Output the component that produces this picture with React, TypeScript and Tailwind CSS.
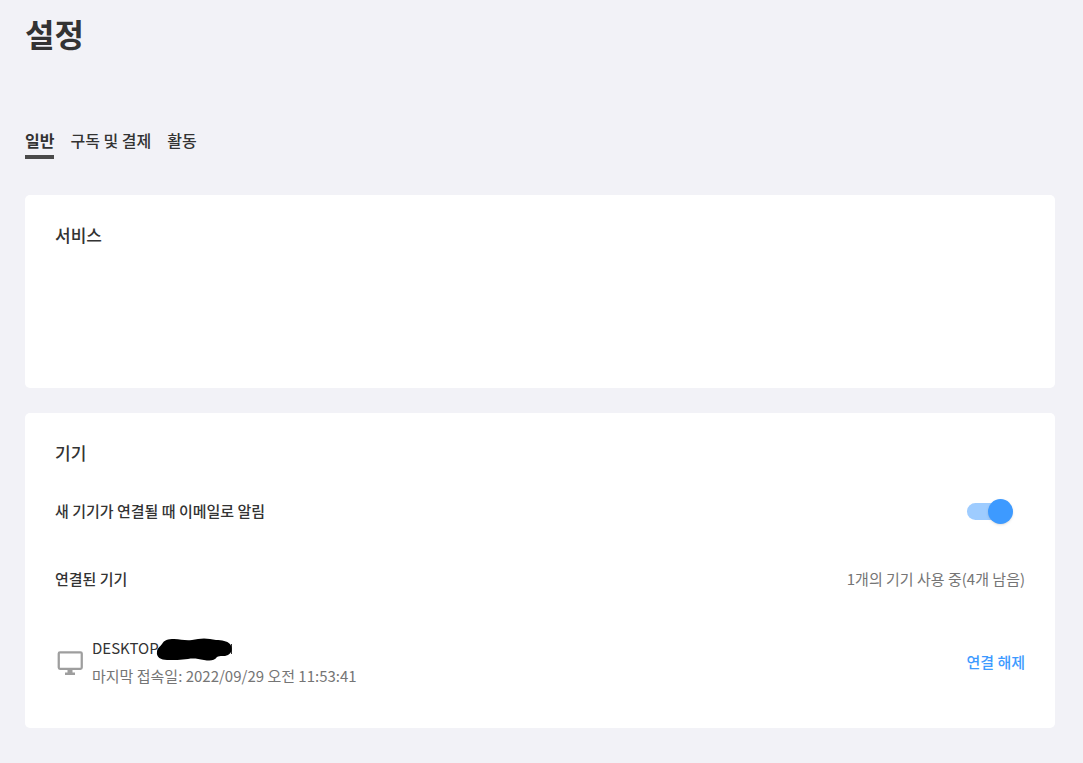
import { useState } from "react";

const tabs = ["일반", "구독 및 결제", "활동"];

function MonitorIcon() {
  return (
    <svg width="26" height="26" viewBox="0 0 26 26" fill="none" aria-hidden="true" className="shrink-0">
      <rect x="1.75" y="3.25" width="23" height="16.5" rx="1.25" stroke="#9e9e9e" strokeWidth="2.25" />
      <path d="M10.5 20.5h5v3h2.5V26H8v-2.5h2.5z" fill="#9e9e9e" />
    </svg>
  );
}

function Redaction() {
  return (
    <svg
      width="77"
      height="24"
      viewBox="0 0 77 24"
      aria-hidden="true"
      className="absolute top-0.5 left-16"
    >
      <path d="M75.5 6v10" stroke="#333333" />
      <path
        d="M1 14C1 10 4 9 6 6C8 2 12 1 18 1C25 1 29 3 36 2C44 0 52 0 60 2C66 2 71 3 74 6C77 10 76 15 72 17C68 19 64 17 61 19C58 23 54 23 48 22C42 21 38 20 32 21C25 22 18 22 11 22C5 22 0 19 1 14Z"
        fill="#000000"
      />
    </svg>
  );
}

export default function App() {
  const [active, setActive] = useState(0);
  const [notify, setNotify] = useState(true);

  return (
    <main className="min-h-screen bg-[#f2f2f7] pt-[10px] pr-7 pb-[35px] pl-[25px] font-['Noto_Sans_CJK_KR','Noto_Sans',sans-serif] text-[15px] leading-6 text-[#333333]">
      <h1 className="text-[32px] leading-[46px] font-bold">설정</h1>

      <nav className="mt-[72px] flex gap-4 text-base">
        {tabs.map((tab, index) => (
          <button
            key={tab}
            type="button"
            onClick={() => setActive(index)}
            className={
              index === active
                ? "border-b-4 border-[#4a4a4a] pb-[3px] font-bold"
                : "border-b-4 border-transparent pb-[3px] font-medium"
            }
          >
            {tab}
          </button>
        ))}
      </nav>

      <section className="mt-9 h-[193px] rounded-[5px] bg-white px-[30px] pt-7">
        <h2 className="text-[17px] font-medium">서비스</h2>
      </section>

      <section className="mt-[25px] rounded-[5px] bg-white px-[30px] pt-7 pb-10">
        <h2 className="text-[17px] font-medium">기기</h2>

        <div className="mt-[34px] flex items-center justify-between">
          <label htmlFor="notify" className="font-medium">
            새 기기가 연결될 때 이메일로 알림
          </label>
          <span className="relative mr-3 flex h-6 w-[46px] items-center">
            <input
              id="notify"
              type="checkbox"
              role="switch"
              checked={notify}
              onChange={(event) => setNotify(event.target.checked)}
              className="peer h-[17px] w-[42px] cursor-pointer appearance-none rounded-full bg-[#bdbdbd] checked:bg-[#9eccff]"
            />
            <span className="pointer-events-none absolute left-0 size-[25px] rounded-full bg-white shadow-sm peer-checked:right-0 peer-checked:left-auto peer-checked:bg-[#3d9aff]" />
          </span>
        </div>

        <div className="mt-11 flex items-center justify-between">
          <h3 className="font-medium">연결된 기기</h3>
          <p className="text-[#757575]">1개의 기기 사용 중(4개 남음)</p>
        </div>

        <div className="mt-[45px] flex items-center justify-between">
          <div className="flex items-center gap-[9px] pl-0.5">
            <MonitorIcon />
            <div>
              <p className="relative mb-1">
                DESKTOP
                <Redaction />
              </p>
              <p className="text-[#757575]">마지막 접속일: 2022/09/29 오전 11:53:41</p>
            </div>
          </div>
          <button type="button" className="font-medium text-[#3d9aff]">
            연결 해제
          </button>
        </div>
      </section>
    </main>
  );
}
